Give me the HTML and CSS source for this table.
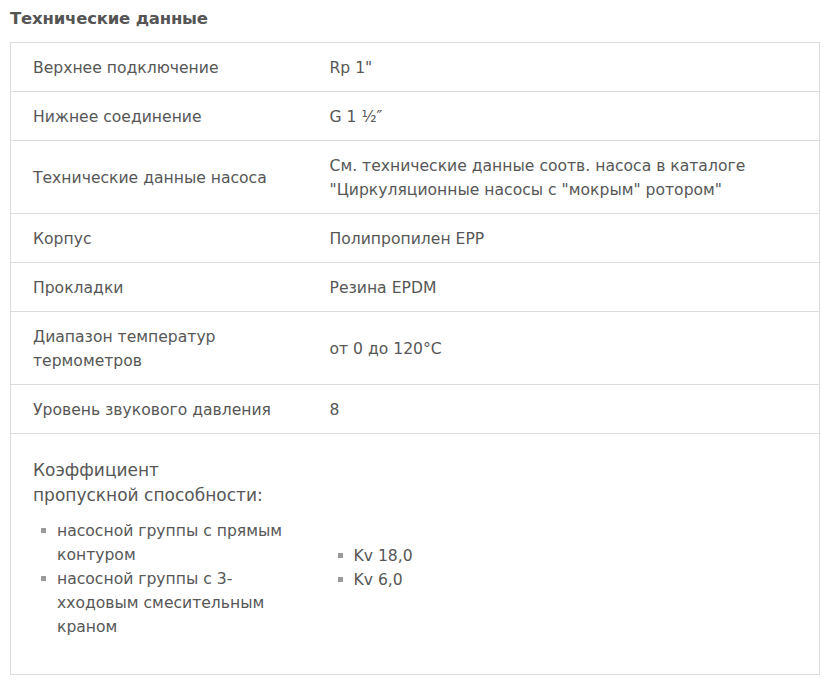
FILE: index.html
```html
<!DOCTYPE html>
<html lang="ru">
<head>
<meta charset="utf-8">
<title>Технические данные</title>
<link rel="stylesheet" href="styles.css">
</head>
<body>
<h2 class="title">Технические данные</h2>
<table class="specs">
  <colgroup><col class="c1"><col class="c2"></colgroup>
  <tr><td>Верхнее подключение</td><td>Rp 1"</td></tr>
  <tr><td>Нижнее соединение</td><td>G 1 ½″</td></tr>
  <tr><td>Технические данные насоса</td><td>См. технические данные соотв. насоса в каталоге<br>"Циркуляционные насосы с "мокрым" ротором"</td></tr>
  <tr><td>Корпус</td><td>Полипропилен EPP</td></tr>
  <tr><td>Прокладки</td><td>Резина EPDM</td></tr>
  <tr><td>Диапазон температур<br>термометров</td><td>от 0 до 120°C</td></tr>
  <tr><td>Уровень звукового давления</td><td>8</td></tr>
  <tr class="last">
    <td>
      <p class="kv-title">Коэффициент<br>пропускной способности:</p>
      <ul class="sq">
        <li>насосной группы с прямым<br>контуром</li>
        <li>насосной группы с 3-<br>хходовым смесительным<br>краном</li>
      </ul>
    </td>
    <td>
      <ul class="sq kv-values">
        <li>Kv 18,0</li>
        <li>Kv 6,0</li>
      </ul>
    </td>
  </tr>
</table>
</body>
</html>
```
FILE: styles.css
```css
html, body {
  margin: 0;
  padding: 0;
  background: #ffffff;
}
body {
  padding: 0 9px 0 10px;
  font-family: "DejaVu Sans", Verdana, sans-serif;
  color: #575757;
}
.title {
  margin: 0;
  height: 42px;
  line-height: 38px;
  font-size: 16.5px;
  font-weight: bold;
  color: #555555;
  letter-spacing: -0.2px;
}
.specs {
  width: 810px;
  border-collapse: collapse;
  border: 1px solid #dcdcdc;
  font-size: 15.6px;
  line-height: 24px;
}
.c1 { width: 297px; }
.specs td {
  padding: 13px 10px 11px 22px;
  border-top: 1px solid #dcdcdc;
  vertical-align: middle;
  text-align: left;
}
.specs tr:first-child td { border-top: 0; }
.last td { padding-top: 12px; padding-bottom: 11px; }
.kv-title {
  margin: 12px 0 11px 0;
  font-size: 17px;
  line-height: 25px;
}
.sq {
  list-style: none;
  margin: 0 0 24px 0;
  padding: 0;
}
.sq li {
  position: relative;
  padding-left: 24px;
}
.sq li::before {
  content: "";
  position: absolute;
  left: 8px;
  top: 9px;
  width: 5px;
  height: 5px;
  background: #9a9a9a;
}
.kv-values {
  margin: 27px 0 0 0;
}
```
